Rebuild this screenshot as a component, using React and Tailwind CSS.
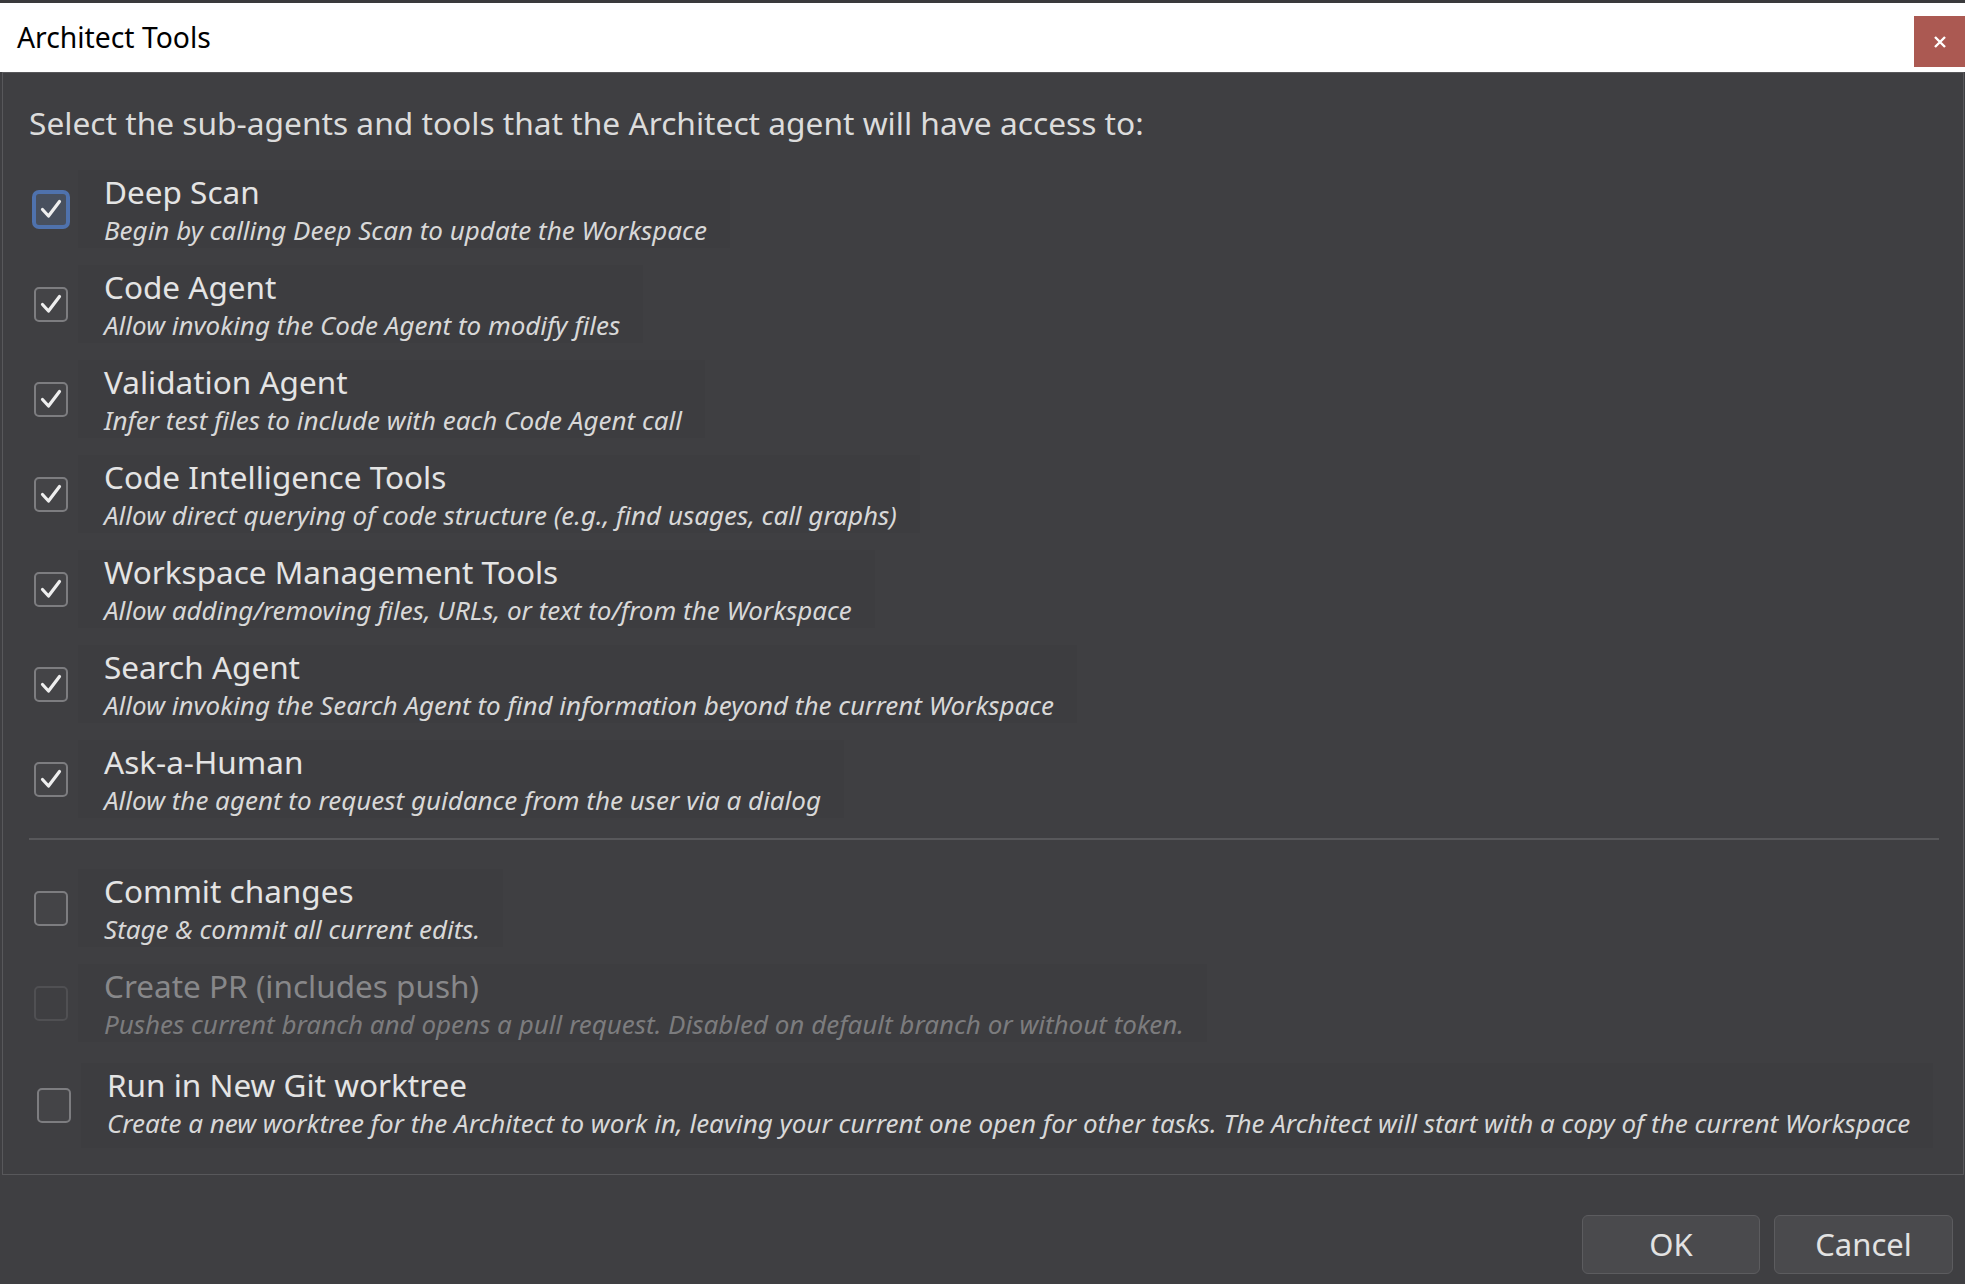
import React, { useState } from 'react';

const tools = [
  { title: 'Deep Scan', desc: 'Begin by calling Deep Scan to update the Workspace', checked: true, focused: true },
  { title: 'Code Agent', desc: 'Allow invoking the Code Agent to modify files', checked: true },
  { title: 'Validation Agent', desc: 'Infer test files to include with each Code Agent call', checked: true },
  { title: 'Code Intelligence Tools', desc: 'Allow direct querying of code structure (e.g., find usages, call graphs)', checked: true },
  { title: 'Workspace Management Tools', desc: 'Allow adding/removing files, URLs, or text to/from the Workspace', checked: true },
  { title: 'Search Agent', desc: 'Allow invoking the Search Agent to find information beyond the current Workspace', checked: true },
  { title: 'Ask-a-Human', desc: 'Allow the agent to request guidance from the user via a dialog', checked: true },
];

function CheckBox({ checked, focused, disabled, onClick }) {
  return (
    <button
      type="button"
      onClick={onClick}
      className={`w-[34px] h-[35px] shrink-0 rounded-[5px] border-2 flex items-center justify-center ${
        focused
          ? 'border-[#4f72ad] bg-[#48505e] ring-2 ring-[#4f72ad]'
          : disabled
          ? 'border-[#505053] bg-[#3f3f42]'
          : 'border-[#7d7d80] bg-[#444447]'
      }`}
    >
      {checked && (
        <svg width="26" height="26" viewBox="0 0 26 26">
          <polyline points="4.5,13.5 10.5,20 21.5,5.5" fill="none" stroke="#eeeeee" strokeWidth="3.2" strokeLinecap="round" strokeLinejoin="round" />
        </svg>
      )}
    </button>
  );
}

function ToolRow({ title, desc, checked, focused, disabled, onToggle, className = '', boxClass = 'h-[78px]' }) {
  return (
    <div className={`flex items-center ${className}`}>
      <div className="ml-[5px] mr-[10px]">
        <CheckBox checked={checked} focused={focused} disabled={disabled} onClick={onToggle} />
      </div>
      <div className={`bg-[#3d3d40] pl-[26px] pr-[23px] pt-[3px] ${boxClass}`}>
        <div className={`text-[31.5px] leading-[38px] ${disabled ? 'text-[#88888a]' : 'text-[#e4e4e4]'}`}>{title}</div>
        <div className={`italic text-[26px] leading-[32px] mt-[3px] ${disabled ? 'text-[#7c7c7e]' : 'text-[#d8d8d8]'}`}>{desc}</div>
      </div>
    </div>
  );
}

export default function App() {
  const [state, setState] = useState(tools.map((t) => t.checked));
  const [commit, setCommit] = useState(false);
  const [worktree, setWorktree] = useState(false);

  return (
    <div className="w-[1965px] h-[1284px] bg-[#3f3f42] flex flex-col overflow-hidden" style={{ fontFamily: '"Noto Sans", "Open Sans", sans-serif' }}>
      <div className="h-[3px] bg-[#3a3a3c]" />
      <div className="h-[69px] bg-white flex items-start justify-between">
        <div className="pl-[17px] pt-[16px] text-[28.3px] leading-[36px] text-black">Architect Tools</div>
        <div className="mt-[13px] w-[51px] h-[51px] bg-[#ab5952] flex items-center justify-center">
          <svg width="14" height="14" viewBox="0 0 14 14">
            <path d="M2 2 L12 12 M12 2 L2 12" stroke="#ffffff" strokeWidth="2.4" />
          </svg>
        </div>
      </div>

      <div className="ml-[2px] mr-[1px] border border-[#58585b] pl-[26px] pr-[24px] pt-[30px] pb-[26px]">
        <div className="text-[31.7px] leading-[40px] text-[#dcdcdc]">
          Select the sub-agents and tools that the Architect agent will have access to:
        </div>
        <div className="mt-[27px] flex flex-col gap-[17px]">
          {tools.map((t, i) => (
            <ToolRow
              key={t.title}
              title={t.title}
              desc={t.desc}
              checked={state[i]}
              focused={t.focused}
              onToggle={() => setState(state.map((v, j) => (j === i ? !v : v)))}
            />
          ))}
        </div>
        <div className="mt-[20px] h-[2px] bg-[#58585b]" />
        <ToolRow
          className="mt-[29px]"
          title="Commit changes"
          desc="Stage & commit all current edits."
          checked={commit}
          onToggle={() => setCommit(!commit)}
        />
        <ToolRow
          className="mt-[17px]"
          title="Create PR (includes push)"
          desc="Pushes current branch and opens a pull request. Disabled on default branch or without token."
          checked={false}
          disabled
        />
        <ToolRow
          className="mt-[21px] ml-[3px]"
          boxClass="h-[85px]"
          title="Run in New Git worktree"
          desc="Create a new worktree for the Architect to work in, leaving your current one open for other tasks. The Architect will start with a copy of the current Workspace"
          checked={worktree}
          onToggle={() => setWorktree(!worktree)}
        />
      </div>

      <div className="mt-[40px] flex justify-end gap-[14px] pr-[12px]">
        <button type="button" className="w-[178px] h-[59px] rounded-[6px] border border-[#5c5c5f] bg-[#4a4a4d] text-[31px] text-[#e2e2e2]">
          OK
        </button>
        <button type="button" className="w-[179px] h-[59px] rounded-[6px] border border-[#5c5c5f] bg-[#4a4a4d] text-[31px] text-[#e2e2e2]">
          Cancel
        </button>
      </div>
    </div>
  );
}
